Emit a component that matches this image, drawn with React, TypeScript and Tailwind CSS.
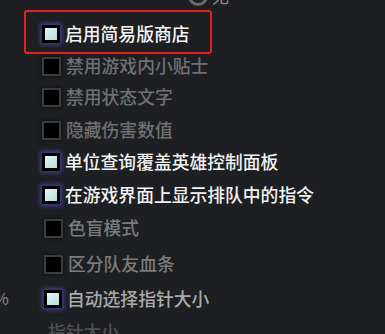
import React from "react";

const font = { fontFamily: '"Noto Sans CJK SC", "Noto Sans", sans-serif' };

function Checked() {
  return (
    <div className="w-[18px] h-[18px] shrink-0 bg-black flex items-center justify-center shadow-[0_0_4px_2px_rgba(90,90,210,0.55)]">
      <div className="w-[12px] h-[12px] bg-gradient-to-br from-[#e2f6f5] to-[#b6dedd]" />
    </div>
  );
}

function Unchecked() {
  return (
    <div className="w-[19px] h-[19px] shrink-0 bg-black border-2 border-[#3a3d3e] shadow-[0_0_3px_1px_rgba(0,0,0,0.5)]" />
  );
}

type Row = { label: string; checked: boolean; color: string; cls: string };

const rows: Row[] = [
  { label: "禁用游戏内小贴士", checked: false, color: "text-[#6f7171]", cls: "-mt-[4px] pl-[42px]" },
  { label: "禁用状态文字", checked: false, color: "text-[#6f7171]", cls: "-mt-[1px] pl-[42px]" },
  { label: "隐藏伤害数值", checked: false, color: "text-[#6f7171]", cls: "mt-[1px] pl-[42px]" },
  { label: "单位查询覆盖英雄控制面板", checked: true, color: "text-[#f2f2f2]", cls: "mt-0 pl-[42px]" },
  { label: "在游戏界面上显示排队中的指令", checked: true, color: "text-[#f2f2f2]", cls: "mt-[1px] pl-[42px]" },
  { label: "色盲模式", checked: false, color: "text-[#7a7c7c]", cls: "mt-[1px] pl-[44px]" },
  { label: "区分队友血条", checked: false, color: "text-[#7a7c7c]", cls: "mt-[4px] pl-[44px]" },
  { label: "自动选择指针大小", checked: true, color: "text-[#a9abab]", cls: "mt-[3px] pl-[44px]" },
];

export default function App() {
  return (
    <div
      className="relative w-[385px] h-[334px] overflow-hidden bg-[#1e1f23] flex flex-col"
      style={font}
    >
      {/* top radio option (cut off) */}
      <div className="shrink-0 flex items-center gap-[4px] pl-[188px] -mt-[14px] h-[20px]">
        <div className="w-[20px] h-[20px] rounded-full border-[3px] border-[#6a6b6d]" />
        <span className="text-[17px] leading-none text-[#8a8b8d] -mt-[2px]">无</span>
      </div>

      {/* highlighted option */}
      <div className="shrink-0 mt-[4px] ml-[24px] w-[188px] h-[44px] border-2 border-[#e3231b] rounded-[3px] flex items-center pl-[16px] pt-[4px]">
        <Checked />
        <span className="ml-[5px] text-[17.8px] font-medium leading-none text-[#f4f4f4] whitespace-nowrap">
          启用简易版商店
        </span>
      </div>

      {rows.map((r) => (
        <div key={r.label} className={`shrink-0 h-[32px] flex items-center ${r.cls}`}>
          {r.checked ? <Checked /> : <Unchecked />}
          <span
            className={`ml-[5px] text-[17.8px] font-medium leading-none whitespace-nowrap ${r.color}`}
          >
            {r.label}
          </span>
        </div>
      ))}

      <div className="shrink-0 mt-[1px] pl-[48px] h-[32px] flex items-center">
        <span className="text-[17.8px] font-medium leading-none text-[#4e5052] whitespace-nowrap">
          指针大小
        </span>
      </div>

      <span className="absolute left-[-6px] top-[290px] text-[16px] leading-none text-[#8a8b8d]">
        %
      </span>
    </div>
  );
}
